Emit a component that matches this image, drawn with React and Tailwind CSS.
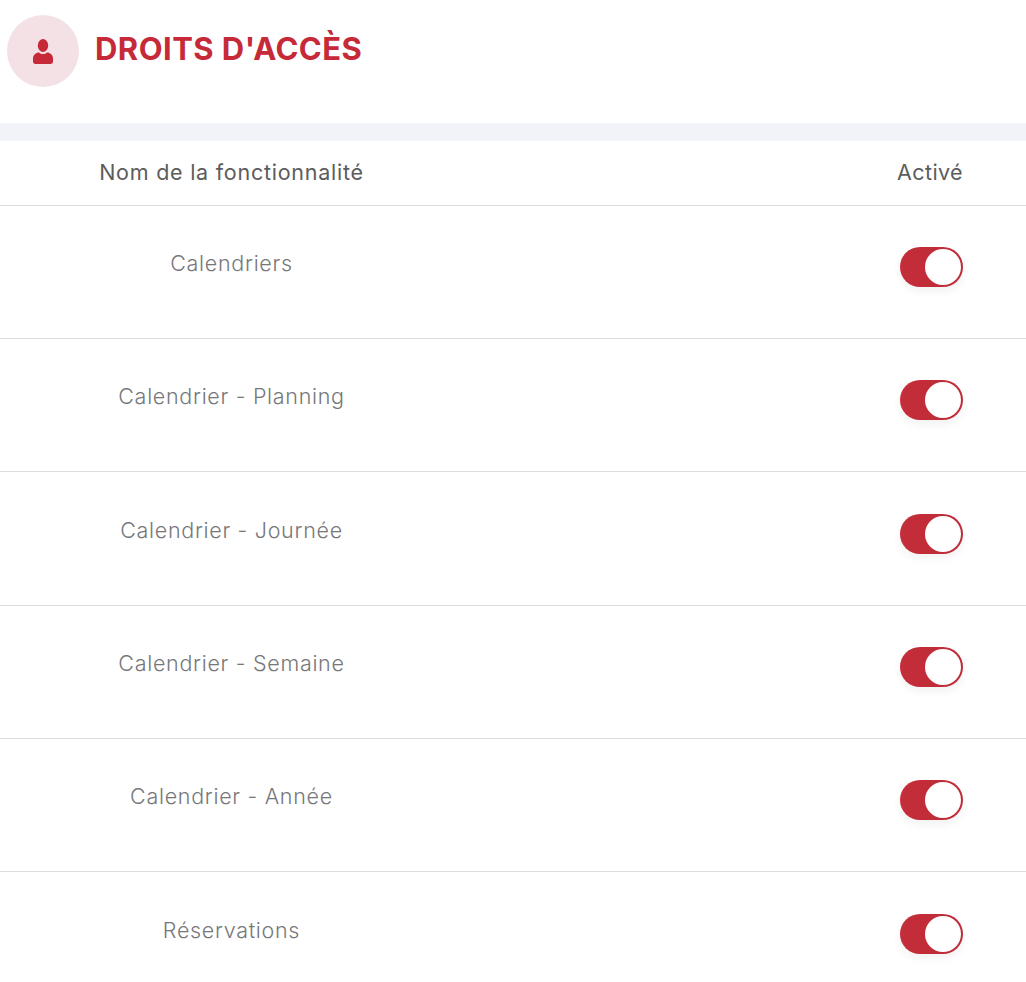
const rows = [
  { name: 'Calendriers', top: 'pt-[41px]' },
  { name: 'Calendrier - Planning', top: 'pt-[41px]' },
  { name: 'Calendrier - Journée', top: 'pt-[42px]' },
  { name: 'Calendrier - Semaine', top: 'pt-[41px]' },
  { name: 'Calendrier - Année', top: 'pt-[41px]' },
  { name: 'Réservations', top: 'pt-[42px]' },
];

const UserIcon = () => (
  <svg width="20" height="25" viewBox="0 0 20 25" className="text-[#c62a38]" fill="currentColor">
    <ellipse cx="10" cy="6.5" rx="5.2" ry="6.5" />
    <path d="M6 13.5c1.2 1 2.5 1.5 4 1.5s2.8-.5 4-1.5c3 0 6 2.5 6 6v3c0 1.5-1 2.5-2.5 2.5h-15C1 25 0 24 0 22.5v-3c0-3.5 3-6 6-6z" />
  </svg>
);

const Toggle = () => (
  <div className="relative h-10 w-[63px] rounded-full bg-gradient-to-r from-[#c42d3a] to-[#bf2b38] shadow-[0_4px_10px_rgba(0,0,0,0.06)]">
    <div className="absolute right-0.5 top-0.5 h-9 w-9 rounded-full bg-white" />
  </div>
);

export default function App() {
  return (
    <div className="h-[982px] overflow-hidden bg-white font-['Inter','Liberation_Sans',sans-serif]">
      <div className="flex h-[123px] items-start gap-4 pl-[7px] pt-[15px]">
        <div className="flex h-[72px] w-[72px] items-center justify-center rounded-full bg-[#f3e1e5]">
          <UserIcon />
        </div>
        <h1 className="mt-[14px] text-[31px] leading-10 font-bold tracking-[0.45px] text-[#c62a38]">DROITS D'ACCÈS</h1>
      </div>
      <div className="h-[18px] bg-[#f2f3f8]" />

      <div className="flex h-[65px] items-center justify-between border-b border-[#dedede] pb-[2px] pr-[63px] text-[21.5px] tracking-[0.75px] text-[#5c5c5c]">
        <div className="w-[463px] text-center">Nom de la fonctionnalité</div>
        <div className="tracking-[0.4px]">Activé</div>
      </div>

      {rows.map((row) => (
        <div key={row.name} className={`flex h-[133.2px] items-start justify-between border-b border-[#dedede] pr-[63px] ${row.top}`}>
          <div className="mt-1 w-[463px] text-center text-[21.5px] leading-6 font-light tracking-[0.7px] text-[#77777a]">{row.name}</div>
          <Toggle />
        </div>
      ))}
    </div>
  );
}
